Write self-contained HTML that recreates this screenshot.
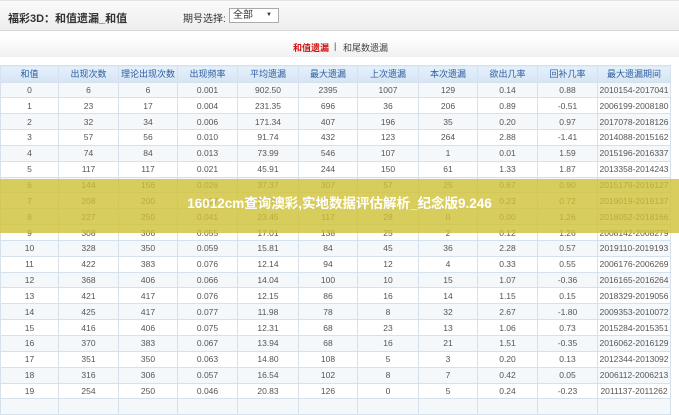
<!DOCTYPE html>
<html><head><meta charset="utf-8"><style>
*{margin:0;padding:0;box-sizing:border-box}
body{width:679px;height:400px;overflow:hidden;background:#fff;font-family:"Liberation Sans","Noto Sans CJK SC",sans-serif;position:relative}
.top{position:absolute;left:0;top:0;width:679px;height:31px;background:linear-gradient(#fafafa,#eeeeee);border-bottom:1px solid #d8d8d8;border-top:1px solid #e4e4e4}
.title{position:absolute;left:8px;top:9px;font-size:11px;font-weight:bold;color:#333}
.lab{position:absolute;left:183px;top:9px;font-size:10px;color:#333}
.sel{position:absolute;left:229px;top:7px;width:50px;height:15px;border:1px solid #aaa;background:#fff;font-size:10px;color:#333;padding-left:3px;line-height:13px}
.sel:after{content:"▼";position:absolute;right:6px;top:0;font-size:6px}
.tabs{position:absolute;left:0;top:37px;width:679px;height:20px;background:linear-gradient(#fff,#f0f0f0);font-size:9px;color:#444}
.tabs .a{position:absolute;left:293px;top:4px;color:#d01010;font-weight:bold}
.tabs .b{position:absolute;left:334px;top:4px}
.tabs .c{position:absolute;left:343px;top:4px}
table{position:absolute;left:0;top:65px;width:670px;border-collapse:collapse;table-layout:fixed}
td,th{border:1px solid #d6e1ec;text-align:center;font-size:8.5px;color:#555;height:15.85px;padding:0;font-weight:normal;white-space:nowrap;overflow:hidden}
th{background:linear-gradient(#e6f0fb,#d4e4f5);color:#2d5e9e;height:16.5px;font-size:9px}
tr:nth-child(even) td{background:#f5f8fb}
.band{position:absolute;left:0;top:179px;width:679px;height:54px;background:rgba(208,194,52,0.8)}
.bt{position:absolute;left:0;top:192px;width:679px;text-align:center;color:#fff;font-weight:bold;font-size:13.5px}
</style></head><body>
<div class="top"><div class="title">福彩3D：和值遗漏_和值</div><div class="lab">期号选择:</div><div class="sel">全部</div></div>
<div class="tabs"><span class="a">和值遗漏</span><span class="b">|</span><span class="c">和尾数遗漏</span></div>
<table>
<colgroup><col style="width:58px"><col style="width:60px"><col style="width:59px"><col style="width:60px"><col style="width:61px"><col style="width:59px"><col style="width:61px"><col style="width:59px"><col style="width:60px"><col style="width:60px"><col style="width:73px"></colgroup>
<tr><th>和值</th><th>出现次数</th><th>理论出现次数</th><th>出现频率</th><th>平均遗漏</th><th>最大遗漏</th><th>上次遗漏</th><th>本次遗漏</th><th>欲出几率</th><th>回补几率</th><th>最大遗漏期间</th></tr>
<tr><td>0</td><td>6</td><td>6</td><td>0.001</td><td>902.50</td><td>2395</td><td>1007</td><td>129</td><td>0.14</td><td>0.88</td><td>2010154-2017041</td></tr>
<tr><td>1</td><td>23</td><td>17</td><td>0.004</td><td>231.35</td><td>696</td><td>36</td><td>206</td><td>0.89</td><td>-0.51</td><td>2006199-2008180</td></tr>
<tr><td>2</td><td>32</td><td>34</td><td>0.006</td><td>171.34</td><td>407</td><td>196</td><td>35</td><td>0.20</td><td>0.97</td><td>2017078-2018126</td></tr>
<tr><td>3</td><td>57</td><td>56</td><td>0.010</td><td>91.74</td><td>432</td><td>123</td><td>264</td><td>2.88</td><td>-1.41</td><td>2014088-2015162</td></tr>
<tr><td>4</td><td>74</td><td>84</td><td>0.013</td><td>73.99</td><td>546</td><td>107</td><td>1</td><td>0.01</td><td>1.59</td><td>2015196-2016337</td></tr>
<tr><td>5</td><td>117</td><td>117</td><td>0.021</td><td>45.91</td><td>244</td><td>150</td><td>61</td><td>1.33</td><td>1.87</td><td>2013358-2014243</td></tr>
<tr><td>6</td><td>144</td><td>156</td><td>0.026</td><td>37.37</td><td>307</td><td>57</td><td>25</td><td>0.67</td><td>0.90</td><td>2015179-2016127</td></tr>
<tr><td>7</td><td>208</td><td>200</td><td>0.037</td><td>25.85</td><td>128</td><td>9</td><td>6</td><td>0.23</td><td>0.72</td><td>2019019-2019137</td></tr>
<tr><td>8</td><td>227</td><td>250</td><td>0.041</td><td>23.45</td><td>117</td><td>28</td><td>0</td><td>0.00</td><td>1.26</td><td>2018052-2018166</td></tr>
<tr><td>9</td><td>308</td><td>306</td><td>0.055</td><td>17.01</td><td>138</td><td>25</td><td>2</td><td>0.12</td><td>1.26</td><td>2008142-2008279</td></tr>
<tr><td>10</td><td>328</td><td>350</td><td>0.059</td><td>15.81</td><td>84</td><td>45</td><td>36</td><td>2.28</td><td>0.57</td><td>2019110-2019193</td></tr>
<tr><td>11</td><td>422</td><td>383</td><td>0.076</td><td>12.14</td><td>94</td><td>12</td><td>4</td><td>0.33</td><td>0.55</td><td>2006176-2006269</td></tr>
<tr><td>12</td><td>368</td><td>406</td><td>0.066</td><td>14.04</td><td>100</td><td>10</td><td>15</td><td>1.07</td><td>-0.36</td><td>2016165-2016264</td></tr>
<tr><td>13</td><td>421</td><td>417</td><td>0.076</td><td>12.15</td><td>86</td><td>16</td><td>14</td><td>1.15</td><td>0.15</td><td>2018329-2019056</td></tr>
<tr><td>14</td><td>425</td><td>417</td><td>0.077</td><td>11.98</td><td>78</td><td>8</td><td>32</td><td>2.67</td><td>-1.80</td><td>2009353-2010072</td></tr>
<tr><td>15</td><td>416</td><td>406</td><td>0.075</td><td>12.31</td><td>68</td><td>23</td><td>13</td><td>1.06</td><td>0.73</td><td>2015284-2015351</td></tr>
<tr><td>16</td><td>370</td><td>383</td><td>0.067</td><td>13.94</td><td>68</td><td>16</td><td>21</td><td>1.51</td><td>-0.35</td><td>2016062-2016129</td></tr>
<tr><td>17</td><td>351</td><td>350</td><td>0.063</td><td>14.80</td><td>108</td><td>5</td><td>3</td><td>0.20</td><td>0.13</td><td>2012344-2013092</td></tr>
<tr><td>18</td><td>316</td><td>306</td><td>0.057</td><td>16.54</td><td>102</td><td>8</td><td>7</td><td>0.42</td><td>0.05</td><td>2006112-2006213</td></tr>
<tr><td>19</td><td>254</td><td>250</td><td>0.046</td><td>20.83</td><td>126</td><td>0</td><td>5</td><td>0.24</td><td>-0.23</td><td>2011137-2011262</td></tr>
<tr><td>&nbsp;</td><td></td><td></td><td></td><td></td><td></td><td></td><td></td><td></td><td></td><td></td></tr>
</table>
<div class="band"></div>
<div class="bt">16012cm查询澳彩,实地数据评估解析_纪念版9.246</div>
</body></html>
